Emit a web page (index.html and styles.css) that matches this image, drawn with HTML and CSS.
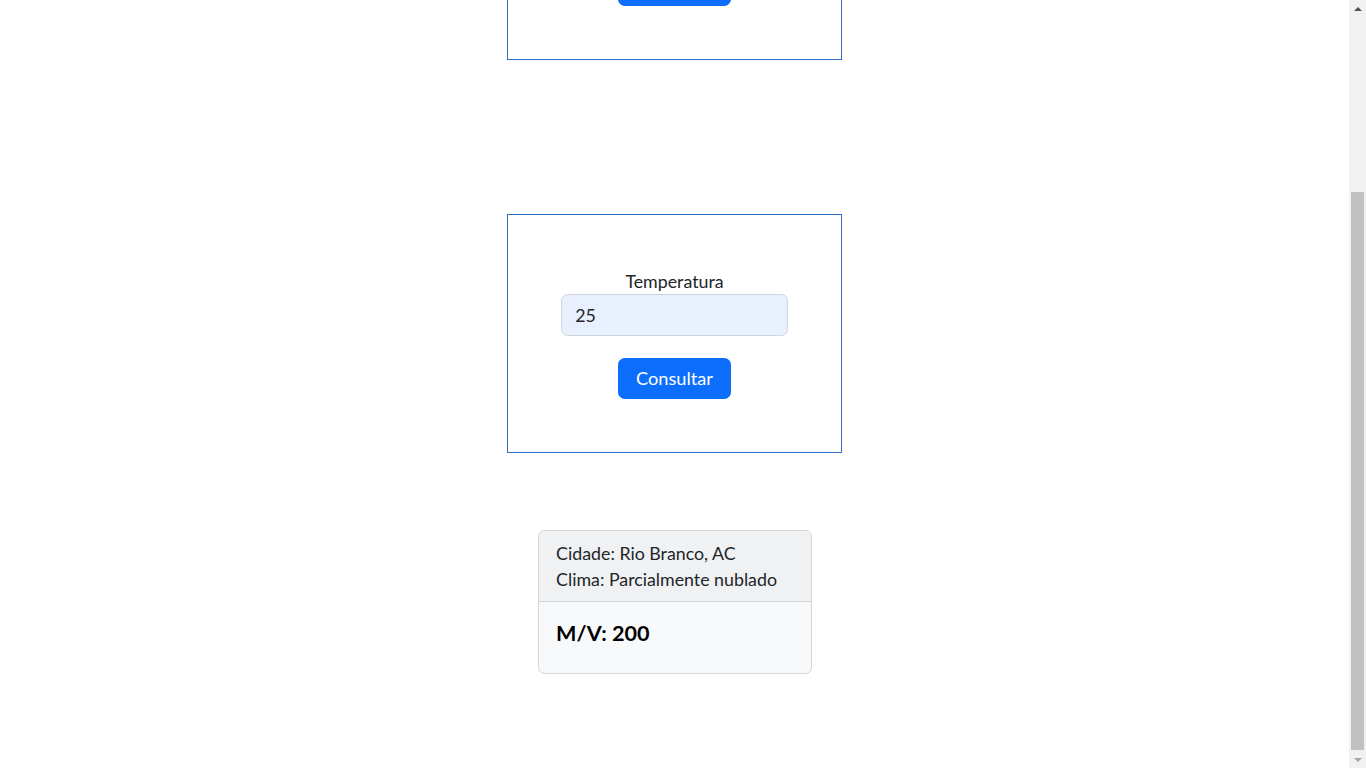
FILE: index.html
```html
<!DOCTYPE html>
<html lang="pt-BR">
<head>
<meta charset="utf-8">
<title>Consulta</title>
<link rel="stylesheet" href="styles.css">
</head>
<body>
<div class="page">
  <main class="viewport">
    <section class="box box-first">
      <label class="label" for="t1">Temperatura</label>
      <input class="field" id="t1" type="text" value="25">
      <button class="btn" type="button">Consultar</button>
    </section>
    <section class="box box-second">
      <label class="label" for="t2">Temperatura</label>
      <input class="field" id="t2" type="text" value="25">
      <button class="btn" type="button">Consultar</button>
    </section>
    <div class="card">
      <div class="card-header">
        <div>Cidade: Rio Branco, AC</div>
        <div>Clima: Parcialmente nublado</div>
      </div>
      <div class="card-body">
        <h5 class="card-title">M/V: 200</h5>
      </div>
    </div>
  </main>
  <div class="scrollbar">
    <div class="arrow arrow-up"></div>
    <div class="track"><div class="thumb"></div></div>
    <div class="arrow arrow-down"></div>
  </div>
</div>
</body>
</html>
```
FILE: styles.css
```css
* { box-sizing: border-box; }
html, body { margin: 0; padding: 0; }
body {
  font-family: "Lato", "Noto Sans", sans-serif;
  font-size: 17.8px;
  line-height: 1.5;
  color: #212529;
  background: #fff;
}
.page {
  display: flex;
  height: 768px;
  overflow: hidden;
}
.viewport {
  flex: 1;
  height: 768px;
  overflow: hidden;
  display: flex;
  flex-direction: column;
  align-items: center;
}
.box {
  width: 335px;
  height: 239px;
  flex-shrink: 0;
  border: 1px solid #2f6fca;
  display: flex;
  flex-direction: column;
  align-items: center;
  justify-content: center;
}
.box-first { margin-top: -179px; }
.box-second { margin-top: 154px; }
.label {
  display: block;
  height: 26.4px;
  line-height: 26.4px;
}
.field {
  display: block;
  width: 227px;
  height: 42px;
  padding: 6.6px 13.2px;
  font: inherit;
  color: #212529;
  background: #e8f0fe;
  border: 1px solid #ced4da;
  border-radius: 6.6px;
  outline: none;
}
.btn {
  display: block;
  width: 113px;
  height: 41px;
  margin-top: 22px;
  padding: 0;
  font: inherit;
  font-size: 18.2px;
  color: #fff;
  background: #0d6efd;
  border: 1px solid #0d6efd;
  border-radius: 6.6px;
}
.card {
  margin-top: 77px;
  width: 274px;
  flex-shrink: 0;
  border: 1px solid #d3d4d6;
  border-radius: 6.6px;
  background: #f8f9fa;
  overflow: hidden;
}
.card-header {
  padding: 8.8px 17.6px;
  line-height: 26.4px;
  background: #f0f1f2;
  border-bottom: 1px solid #d3d4d6;
  white-space: nowrap;
}
.card-body {
  padding: 17.6px;
}
.card-title {
  margin: 0 0 8.8px;
  font-size: 21.6px;
  line-height: 26.4px;
  font-weight: 700;
  color: #000;
}
.scrollbar {
  width: 17px;
  flex-shrink: 0;
  height: 768px;
  background: #f1f1f1;
  display: flex;
  flex-direction: column;
}
.arrow {
  height: 17px;
  display: flex;
  align-items: center;
  justify-content: center;
}
.arrow::before {
  content: "";
  width: 0;
  height: 0;
  border-left: 4px solid transparent;
  border-right: 4px solid transparent;
}
.arrow-up::before { border-bottom: 4px solid #505050; }
.arrow-down::before { border-top: 4px solid #a3a3a3; }
.track {
  flex: 1;
  padding-top: 175px;
  display: flex;
  justify-content: center;
}
.thumb {
  width: 13px;
  height: 558px;
  background: #c1c1c1;
}
```
